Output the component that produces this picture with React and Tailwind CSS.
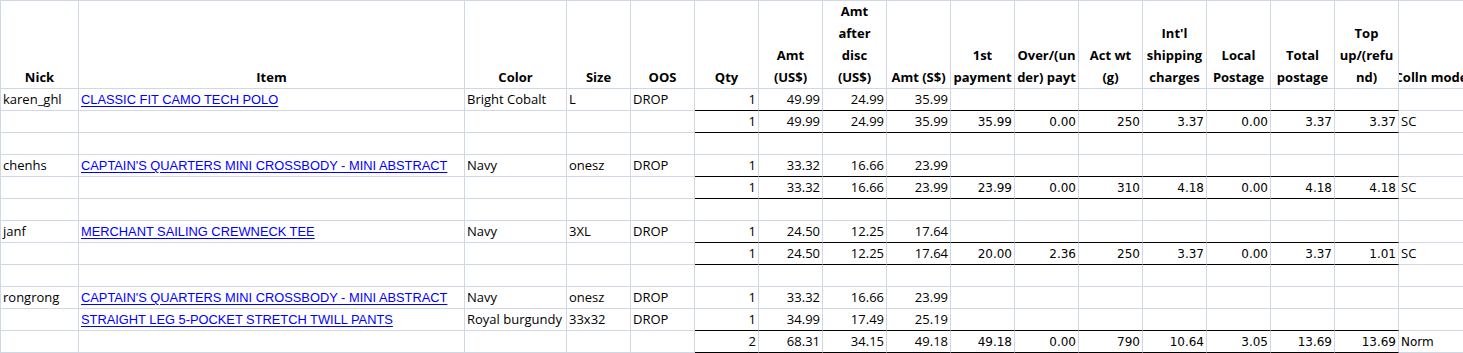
import React from "react";

const GRID = "grid grid-cols-[78px_386px_102px_repeat(14,64px)]";
const COMIC = "font-['Comic_Sans_MS','Open_Sans',sans-serif] text-[13px]";
const ARIAL = "font-['Liberation_Sans',Arial,sans-serif] text-[12.85px]";
const TAHOMA = "font-['DejaVu_Sans',Tahoma,sans-serif] text-[12px]";

const headers = [
  ["Nick"],
  ["Item"],
  ["Color"],
  ["Size"],
  ["OOS"],
  ["Qty"],
  ["Amt", "(US$)"],
  ["Amt", "after", "disc", "(US$)"],
  ["Amt (S$)"],
  ["1st", "payment"],
  ["Over/(un", "der) payt"],
  ["Act wt", "(g)"],
  ["Int'l", "shipping", "charges"],
  ["Local", "Postage"],
  ["Total", "postage"],
  ["Top", "up/(refu", "nd)"],
];

const E = "";
const rows = [
  { t: "item", above: true, c: ["karen_ghl", "CLASSIC FIT CAMO TECH POLO", "Bright Cobalt", "L", "DROP", "1", "49.99", "24.99", "35.99"] },
  { t: "total", c: [E, E, E, E, E, "1", "49.99", "24.99", "35.99", "35.99", "0.00", "250", "3.37", "0.00", "3.37", "3.37", "SC"] },
  { t: "blank", c: [] },
  { t: "item", above: true, c: ["chenhs", "CAPTAIN'S QUARTERS MINI CROSSBODY - MINI ABSTRACT", "Navy", "onesz", "DROP", "1", "33.32", "16.66", "23.99"] },
  { t: "total", c: [E, E, E, E, E, "1", "33.32", "16.66", "23.99", "23.99", "0.00", "310", "4.18", "0.00", "4.18", "4.18", "SC"] },
  { t: "blank", c: [] },
  { t: "item", above: true, c: ["janf", "MERCHANT SAILING CREWNECK TEE", "Navy", "3XL", "DROP", "1", "24.50", "12.25", "17.64"] },
  { t: "total", c: [E, E, E, E, E, "1", "24.50", "12.25", "17.64", "20.00", "2.36", "250", "3.37", "0.00", "3.37", "1.01", "SC"] },
  { t: "blank", c: [] },
  { t: "item", c: ["rongrong", "CAPTAIN'S QUARTERS MINI CROSSBODY - MINI ABSTRACT", "Navy", "onesz", "DROP", "1", "33.32", "16.66", "23.99"] },
  { t: "item", above: true, c: [E, "STRAIGHT LEG 5-POCKET STRETCH TWILL PANTS", "Royal burgundy", "33x32", "DROP", "1", "34.99", "17.49", "25.19"] },
  { t: "total", c: [E, E, E, E, E, "2", "68.31", "34.15", "49.18", "49.18", "0.00", "790", "10.64", "3.05", "13.69", "13.69", "Norm"] },
];

function Cell({ col, value, blackBottom }) {
  const last = col === 16;
  const right = col >= 5 && col <= 15;
  const border = last
    ? "border-b border-[#d0d7e5]"
    : blackBottom
    ? "border-r border-b border-r-[#d0d7e5] border-b-black"
    : "border-r border-b border-[#d0d7e5]";
  let font = COMIC;
  if (col === 1) font = ARIAL;
  else if (col >= 9 && col <= 15) font = TAHOMA;
  else if (col === 16 && value === "Norm") font = TAHOMA;
  return (
    <div
      className={`h-[22px] ${border} flex items-center overflow-hidden whitespace-nowrap text-black ${font} ${
        right ? "justify-end pr-[2px]" : "justify-start pl-[2px]"
      }`}
    >
      {col === 1 && value ? (
        <span className="text-[#0000ff] underline underline-offset-[2px]">{value}</span>
      ) : (
        value
      )}
    </div>
  );
}

export default function App() {
  return (
    <div className="w-[1463px] h-[353px] bg-white overflow-hidden">
      <div className={`${GRID} border-l border-t border-[#d0d7e5]`}>
        {headers.map((lines, i) => (
          <div
            key={i}
            className={`h-[88px] border-r border-b border-[#d0d7e5] flex flex-col justify-end items-center text-center font-bold leading-[22px] text-black ${COMIC} whitespace-nowrap`}
          >
            {lines.map((l, j) => (
              <div key={j}>{l}</div>
            ))}
          </div>
        ))}
        <div
          className={`h-[88px] border-b border-[#d0d7e5] flex items-end justify-center overflow-hidden font-bold leading-[22px] text-black ${COMIC}`}
        >
          <span className="whitespace-nowrap shrink-0">Colln mode</span>
        </div>

        {rows.map((r, ri) =>
          Array.from({ length: 17 }).map((_, ci) => {
            const black = (r.t === "total" || r.above) && ci >= 5 && ci <= 15;
            return <Cell key={`${ri}-${ci}`} col={ci} value={r.c[ci] || ""} blackBottom={black} />;
          })
        )}
      </div>
    </div>
  );
}
